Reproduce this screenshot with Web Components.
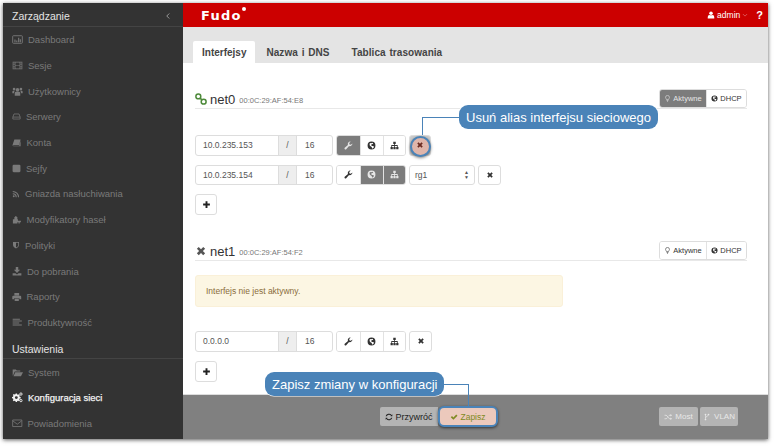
<!DOCTYPE html>
<html lang="pl">
<head>
<meta charset="utf-8">
<title>Fudo</title>
<style>
  html, body { margin: 0; background: #fff; height: 100%; overflow: hidden; }
  body { padding: 3px 0 0 3px; box-sizing: border-box; font-family: "Liberation Sans", Arial, sans-serif; }
</style>
</head>
<body>
<fudo-window>
  <side-nav slot="nav">
    <nav-heading first>Zarządzanie</nav-heading>
    <nav-item icon="dashboard" w="11">Dashboard</nav-item>
    <nav-item icon="film" w="11">Sesje</nav-item>
    <nav-item icon="users" w="11">Użytkownicy</nav-item>
    <nav-item icon="hdd" w="9">Serwery</nav-item>
    <nav-item icon="book" w="9.5">Konta</nav-item>
    <nav-item icon="safe" w="9">Sejfy</nav-item>
    <nav-item icon="rss" w="8">Gniazda nasłuchiwania</nav-item>
    <nav-item icon="puzzle" w="9.5">Modyfikatory haseł</nav-item>
    <nav-item icon="shield" w="8">Polityki</nav-item>
    <nav-item icon="download" w="10">Do pobrania</nav-item>
    <nav-item icon="print" w="9.5">Raporty</nav-item>
    <nav-item icon="lines" w="10.5">Produktywność</nav-item>
    <nav-heading>Ustawienia</nav-heading>
    <nav-item icon="folder" w="11">System</nav-item>
    <nav-item icon="cogs" w="11" active>Konfiguracja sieci</nav-item>
    <nav-item icon="envelope" w="10.5">Powiadomienia</nav-item>
  </side-nav>
  <top-bar slot="top"></top-bar>
  <tab-bar slot="tabs">
    <tab-item active>Interfejsy</tab-item>
    <tab-item>Nazwa i DNS</tab-item>
    <tab-item>Tablica trasowania</tab-item>
  </tab-bar>

  <net-section name="net0" mac="00:0C:29:AF:54:E8" icon="link" on>
    <addr-row ip="10.0.235.153" prefix="16" pressed="wrench" remove="highlight"></addr-row>
    <addr-row ip="10.0.235.154" prefix="16" pressed="globe sitemap" select="rg1"></addr-row>
    <plus-button></plus-button>
  </net-section>

  <net-section name="net1" mac="00:0C:29:AF:54:F2" icon="times" style="margin-top:27px">
    <alert-box>Interfejs nie jest aktywny.</alert-box>
    <addr-row ip="0.0.0.0" prefix="16"></addr-row>
    <plus-button></plus-button>
  </net-section>

  <foot-bar slot="foot"></foot-bar>

  <call-out slot="over" side="left" style="left:456px;top:102px">Usuń alias interfejsu sieciowego</call-out>
  <call-out slot="over" side="right" style="left:262px;top:369px">Zapisz zmiany w konfiguracji</call-out>
</fudo-window>

<script>
/** Icon shapes, all on a 16x16 box. */
const ICONS = {
  dashboard: '<rect x="1" y="2.5" width="14" height="11" rx="1" fill="none" stroke="currentColor" stroke-width="1.3"/><path d="M3.5 8h1.6v4H3.5zM6.2 9.5h1.6V12H6.2zM8.9 5.5h1.6V12H8.9zM11.3 7.5h1.6V12h-1.6z"/>',
  film: '<path fill-rule="evenodd" d="M1 2.5h14v11H1zM2 3.5v2h2v-2zM2 6.5v3h2v-3zM2 10.5v2h2v-2zM5 3.5v4h6v-4zM5 8.5v4h6v-4zM12 3.5v2h2v-2zM12 6.5v3h2v-3zM12 10.5v2h2v-2z"/>',
  users: '<circle cx="8" cy="5.5" r="2.7"/><circle cx="3" cy="4.5" r="1.9"/><circle cx="13" cy="4.5" r="1.9"/><path d="M4 14V10.5Q4 8.5 6 8.5h4q2 0 2 2V14zM.5 10.5V8.5Q.5 7 2 7h2Q3 8.5 3 10.5zM15.5 10.5V8.5Q15.5 7 14 7h-2q1 1.5 1 3.5z"/>',
  hdd: '<path fill="none" stroke="currentColor" stroke-width="1.3" d="M1.5 9l2-5.5h9l2 5.5v3.5h-13zM1.5 9h13"/>',
  book: '<path d="M4 2.5h10.5L12 12H3Q1.5 12 1.5 13.5H12l2.5-9V14H2.5Q.5 14 1 11.5z"/>',
  safe: '<rect x="1" y="1.5" width="14" height="13" rx="2"/>',
  rss: '<circle cx="3.5" cy="12.5" r="1.9"/><path d="M1.5 6.5a8 8 0 0 1 8 8H7.3a5.8 5.8 0 0 0-5.8-5.8zM1.5 1.8a12.7 12.7 0 0 1 12.7 12.7H12A10.5 10.5 0 0 0 1.5 4z"/>',
  puzzle: '<path d="M4 7V3.5h1.5V1.5h2v2H9V7h1v2.500h5V12h-2v2.500h-2V12H9v2.500H1.500V7z"/>',
  shield: '<path fill-rule="evenodd" d="M2 2h12v6.5q0 4-6 6.5-6-2.5-6-6.5zM8 3.5v9.5q4.5-2 4.5-4.5v-5z"/>',
  download: '<path d="M6 1.5h4V6h3L8 11 3 6h3zM1 11.5h4.5L8 13.5l2.5-2H15V15H1z"/>',
  print: '<path d="M4 1.5h8V6H4zM2 6.5h12q1.5 0 1.5 1.5v4H12.5v-1.5h-9V12H.5V8Q.5 6.5 2 6.5zM4.500 11.5h7V15h-7z"/>',
  lines: '<path d="M1 2.5h11V4H1zM1 5.5h14V7H1zM1 8.5h10V10H1zM1 11.5h14V13H1z"/>',
  folder: '<path d="M1 12.5V3.5h4.5L7 5h5v1.5H4L1.5 12.5zM4.8 7.5H16L13 13.5H2.2z"/>',
  cogs: '<path fill-rule="evenodd" d="M5.3 3.5h2l.3 1.500 1.200.5 1.300-.8 1.300 1.400-.8 1.200.5 1.200 1.500.4v1.900l-1.500.3-.5 1.200.8 1.300-1.300 1.300-1.300-.8-1.200.5-.3 1.500h-2l-.3-1.500-1.200-.5-1.300.8-1.300-1.300.8-1.300-.5-1.200L0 10.600V8.700l1.500-.4.5-1.200-.8-1.200 1.300-1.400 1.300.8 1.200-.5zM6.300 7.500a2.100 2.100 0 1 0 0 4.300 2.100 2.100 0 0 0 0-4.300z" transform="translate(0 -1.5)"/><circle cx="13" cy="3" r="1.7" fill="none" stroke="currentColor" stroke-width="1.3"/><circle cx="13" cy="12.5" r="1.7" fill="none" stroke="currentColor" stroke-width="1.3"/>',
  envelope: '<path fill="none" stroke="currentColor" stroke-width="1.2" d="M1 3h14v10H1zM1.5 4.5L8 9.5l6.5-5"/>',
  wrench: '<path d="M14.8 4.3a4.3 4.3 0 0 1-5.8 4.5L3.9 14.5a1.7 1.7 0 0 1-2.6-2.4L7 7A4.3 4.3 0 0 1 11.8 1.2L9.2 3.7l.6 2.5 2.5.6z"/>',
  globe: '<path fill-rule="evenodd" d="M8 1a7 7 0 1 0 0 14A7 7 0 0 0 8 1zM5 3.5l2.5.5L9 3l2 .8-.7 1.7-2.3.4-.6 1.600 1.600 1.500h2.500l.8 2-2.300 2.200-1.200-.2-.3-2.500-2.300-1-1.700-2.500.4-1.500z"/>',
  sitemap: '<path d="M5.8 1.5h4.4v4H8.7v1.800h5v3.200H15v4h-4v-4h1.300V8.700H8.700v1.800H10v4H6v-4h1.300V8.700H3.700v1.800H5v4H1v-4h1.300V7.300h5V5.500H5.800z"/>',
  times: '<path d="M2.5 5L5 2.5l3 3 3-3L13.5 5l-3 3 3 3-2.500 2.500-3-3-3 3L2.500 11l3-3z"/>',
  plus: '<path d="M6.3 2h3.4v4.3H14v3.4H9.7V14H6.3V9.7H2V6.3h4.3z"/>',
  link: '<g fill="none" stroke="currentColor" stroke-width="2"><rect x="1.2" y="1.2" width="6.5" height="6.5" rx="3.2"/><rect x="8.3" y="8.3" width="6.5" height="6.5" rx="3.2"/><path d="M6.5 6.5l3 3"/></g>',
  bulb: '<path fill="none" stroke="currentColor" stroke-width="1.3" d="M5.8 10.5C5.5 8.5 3.5 7.8 3.5 5.5a4.5 4.5 0 0 1 9 0c0 2.3-2 3-2.3 5zM6 12.5h4M6.8 14.5h2.4"/>',
  refresh: '<path d="M13.7 6.5H11l1-1A5 5 0 0 0 3.5 6.5H1.3A7 7 0 0 1 13.3 3.8L14.7 2.5v4zM2.3 9.5H5l-1 1a5 5 0 0 0 8.500-1h2.200A7 7 0 0 1 2.700 12.200L1.300 13.500v-4z"/>',
  check: '<path d="M1.5 8.5L4 6l2.8 2.8L12.5 3 15 5.5l-8.200 8.200z"/>',
  random: '<path fill="none" stroke="currentColor" stroke-width="1.5" d="M1 4.5h3c3 0 4.500 7 7.500 7H14M1 11.500h3c1.200 0 2-1 2.800-2.300M9 6.500c.7-1.100 1.500-2 2.500-2H14"/><path d="M13 2l3 2.500L13 7zM13 9l3 2.500-3 2.500z"/>',
  fork: '<circle cx="5" cy="3" r="1.7"/><circle cx="5" cy="13" r="1.7"/><circle cx="11" cy="3" r="1.7"/><path fill="none" stroke="currentColor" stroke-width="1.3" d="M5 3v10M11 3c0 4-6 3-6 7"/>',
  user: '<circle cx="8" cy="4.5" r="3.5"/><path d="M1.5 15v-3q0-4 3.500-4.200 3 1.800 6 0Q14.500 8 14.500 12v3z"/>',
  chevleft: '<path fill="none" stroke="currentColor" stroke-width="1.7" d="M10.5 3L5.5 8l5 5"/>',
  chevdown: '<path fill="none" stroke="currentColor" stroke-width="1.3" d="M2.5 5.5L8 11l5.500-5.500"/>',
};

/** Small inline SVG icon; takes its colour from the text around it. */
class UiIcon extends HTMLElement {
  static get observedAttributes() {
    return ["name", "size"];
  }

  constructor() {
    super();
    this.attachShadow({ mode: "open" });
  }

  connectedCallback() {
    this.render();
  }

  attributeChangedCallback() {
    this.render();
  }

  render() {
    const size = this.getAttribute("size") ?? "10";
    const name = this.getAttribute("name") ?? "";
    this.shadowRoot.innerHTML = `
      <style>
        :host { display: inline-flex; flex: none; width: ${size}px; height: ${size}px; }
        svg { width: 100%; height: 100%; fill: currentColor; display: block; }
      </style>
      <svg viewBox="0 0 16 16" aria-hidden="true">${ICONS[name] ?? ""}</svg>`;
  }
}
customElements.define("ui-icon", UiIcon);

/** Application frame: sidebar on the left, header, tabs, content and footer on the right. */
class FudoWindow extends HTMLElement {
  constructor() {
    super();
    this.attachShadow({ mode: "open" }).innerHTML = `
      <style>
        :host {
          display: flex;
          position: relative;
          width: 765px;
          height: 436px;
          background: #fff;
          box-shadow: 0 1px 4px rgba(0, 0, 0, .65);
        }
        .main { flex: 1; min-width: 0; display: flex; flex-direction: column; }
        .content { flex: 1; min-height: 0; padding: 27px 21px 0 12px; overflow: hidden; }
      </style>
      <slot name="nav"></slot>
      <div class="main">
        <slot name="top"></slot>
        <slot name="tabs"></slot>
        <div class="content"><slot></slot></div>
        <slot name="foot"></slot>
      </div>
      <slot name="over"></slot>`;
  }
}
customElements.define("fudo-window", FudoWindow);

class SideNav extends HTMLElement {
  constructor() {
    super();
    this.attachShadow({ mode: "open" }).innerHTML = `
      <style>
        :host {
          display: flex;
          flex-direction: column;
          flex: none;
          position: relative;
          width: 180px;
          background: #333;
        }
        .toggle { position: absolute; display: flex; top: 9px; right: 11px; color: #aaa; }
      </style>
      <span class="toggle"><ui-icon name="chevleft" size="8"></ui-icon></span>
      <slot></slot>`;
  }
}
customElements.define("side-nav", SideNav);

class NavHeading extends HTMLElement {
  constructor() {
    super();
    this.attachShadow({ mode: "open" }).innerHTML = `
      <style>
        :host {
          display: flex;
          align-items: center;
          box-sizing: border-box;
          height: 24px;
          padding: 3px 0 0 9px;
          font-size: 10.5px;
          color: #e4e4e4;
          border-bottom: 1px solid #444;
        }
        :host(:not([first])) { padding-top: 5px; }
      </style>
      <slot></slot>`;
  }
}
customElements.define("nav-heading", NavHeading);

class NavItem extends HTMLElement {
  constructor() {
    super();
    const icon = this.getAttribute("icon") ?? "";
    const width = this.getAttribute("w") ?? "10";
    this.attachShadow({ mode: "open" }).innerHTML = `
      <style>
        :host {
          display: flex;
          align-items: center;
          gap: 5px;
          height: 25.7px;
          padding-left: 9px;
          font-size: 9.5px;
          color: #7a7a7a;
        }
        :host([active]) { color: #f2f2f2; -webkit-text-stroke: .25px #f2f2f2; }
        .box { display: flex; width: ${width}px; justify-content: center; }
      </style>
      <span class="box"><ui-icon name="${icon}" size="${width}"></ui-icon></span>
      <slot></slot>`;
  }
}
customElements.define("nav-item", NavItem);

class TopBar extends HTMLElement {
  constructor() {
    super();
    this.attachShadow({ mode: "open" }).innerHTML = `
      <style>
        :host {
          display: flex;
          align-items: center;
          flex: none;
          height: 24px;
          padding: 0 5px 0 18px;
          background: #c00;
          color: #fff;
        }
        .logo { font: bold 13px/1 "DejaVu Sans", sans-serif; letter-spacing: 1.2px; position: relative; }
        .dot { position: absolute; top: -2px; right: -4px; width: 4px; height: 4px; border-radius: 50%; background: #fff; }
        .user { margin-left: auto; display: flex; align-items: center; gap: 2px; font-size: 8.5px; }
        .caret { display: flex; color: #f0a8a8; }
        .help { margin-left: 8px; font-size: 11px; font-weight: bold; }
      </style>
      <span class="logo">Fudo<span class="dot"></span></span>
      <span class="user"><ui-icon name="user" size="8"></ui-icon>admin<span class="caret"><ui-icon name="chevdown" size="6"></ui-icon></span></span>
      <span class="help">?</span>`;
  }
}
customElements.define("top-bar", TopBar);

class TabBar extends HTMLElement {
  constructor() {
    super();
    this.attachShadow({ mode: "open" }).innerHTML = `
      <style>
        :host {
          display: flex;
          align-items: flex-end;
          flex: none;
          height: 36px;
          padding-left: 10px;
          background: #e4e4e4;
        }
      </style>
      <slot></slot>`;
  }
}
customElements.define("tab-bar", TabBar);

class TabItem extends HTMLElement {
  constructor() {
    super();
    this.attachShadow({ mode: "open" }).innerHTML = `
      <style>
        :host {
          display: flex;
          align-items: center;
          height: 22px;
          padding: 0 10px;
          margin-right: 2px;
          font-size: 10px;
          letter-spacing: .05px;
          word-spacing: 1px;
          font-weight: bold;
          color: #444;
          border-radius: 2px 2px 0 0;
        }
        :host([active]) { background: #fff; padding: 0 9px; margin-right: 1px; letter-spacing: 0; }
      </style>
      <slot></slot>`;
  }
}
customElements.define("tab-item", TabItem);

/** One network interface: title, state toggles and whatever is slotted below. */
class NetSection extends HTMLElement {
  constructor() {
    super();
    const on = this.hasAttribute("on");
    this.attachShadow({ mode: "open" }).innerHTML = `
      <style>
        :host { display: block; }
        .head {
          display: flex;
          align-items: flex-end;
          height: 18px;
          border-bottom: 1px solid #e8e8e8;
        }
        .icon { color: ${on ? "#4d8a3a" : "#555"}; margin: 0 3px 3px 0; }
        .name { font-size: 13px; color: #333; line-height: 15px; margin-bottom: 1px; }
        .mac { font-size: 7.5px; color: #777; margin: 0 0 3px 4px; }
        .toggles { margin-left: auto; }
        .body { display: flex; flex-direction: column; align-items: flex-start; gap: 9px; margin-top: 26px; }
        ::slotted(alert-box) { margin: -12px 0 15px; }
      </style>
      <div class="head">
        <ui-icon class="icon" name="${this.getAttribute("icon")}" size="12"></ui-icon>
        <span class="name">${this.getAttribute("name")}</span>
        <span class="mac">${this.getAttribute("mac")}</span>
        <btn-group class="toggles">
          <ui-btn ${on ? "pressed" : ""} small icon="bulb" w="46">Aktywne</ui-btn>
          <ui-btn small icon="globe" w="40">DHCP</ui-btn>
        </btn-group>
      </div>
      <div class="body"><slot></slot></div>`;
  }
}
customElements.define("net-section", NetSection);

class BtnGroup extends HTMLElement {
  constructor() {
    super();
    this.attachShadow({ mode: "open" }).innerHTML = `
      <style>
        :host {
          display: inline-flex;
          border: 1px solid #ddd;
          border-radius: 3px;
          overflow: hidden;
          background: #fff;
        }
        ::slotted(ui-btn:not(:first-child)) { border-left: 1px solid #e2e2e2; }
      </style>
      <slot></slot>`;
  }
}
customElements.define("btn-group", BtnGroup);

/** Flat button with optional icon; "pressed" paints it dark grey. */
class UiBtn extends HTMLElement {
  constructor() {
    super();
    const icon = this.getAttribute("icon");
    const width = this.getAttribute("w") ?? "23";
    const small = this.hasAttribute("small");
    this.attachShadow({ mode: "open" }).innerHTML = `
      <style>
        :host {
          display: flex;
          align-items: center;
          justify-content: center;
          gap: 2px;
          box-sizing: border-box;
          width: ${width}px;
          height: ${small ? "17px" : "100%"};
          font-size: 7.5px;
          color: #333;
          background: #fff;
        }
        :host([pressed]) { background: #7c7c7c; color: #e6e6e6; }
      </style>
      ${icon ? `<ui-icon name="${icon}" size="${small ? 7 : 9}"></ui-icon>` : ""}
      <slot></slot>`;
  }
}
customElements.define("ui-btn", UiBtn);

/** Address row: IP / prefix, the three role toggles, optional group select, remove button. */
class AddrRow extends HTMLElement {
  constructor() {
    super();
    const pressed = (this.getAttribute("pressed") ?? "").split(" ");
    const select = this.getAttribute("select");
    const hot = this.getAttribute("remove") === "highlight";
    const role = (name) =>
      `<ui-btn icon="${name}" w="${name === "wrench" ? 23 : 22.5}" ${pressed.includes(name) ? "pressed" : ""}></ui-btn>`;
    this.attachShadow({ mode: "open" }).innerHTML = `
      <style>
        :host { display: flex; gap: 3px; height: 20.5px; color: #555; font-size: 8.5px; }
        .addr { display: flex; border: 1px solid #ddd; border-radius: 3px; box-sizing: border-box; }
        .addr span { display: flex; align-items: center; box-sizing: border-box; }
        .ip { width: 82px; padding-left: 7px; }
        .slash { width: 19px; justify-content: center; background: #eee; border: solid #ddd; border-width: 0 1px; }
        .prefix { width: 35px; padding-left: 8px; }
        btn-group { height: 20.5px; box-sizing: border-box; }
        .select {
          display: flex;
          align-items: center;
          justify-content: space-between;
          box-sizing: border-box;
          width: 66px;
          padding: 0 5px;
          border: 1px solid #ddd;
          border-radius: 3px;
        }
        .arrows { font-size: 5px; line-height: 5px; text-align: center; }
        .remove {
          position: relative;
          display: flex;
          align-items: center;
          justify-content: center;
          box-sizing: border-box;
          width: 23px;
          border: 1px solid #ddd;
          border-radius: 3px;
          color: #333;
        }
        .remove.hot { background: #ccc; color: #6a2a20; width: 22px; }
        .remove.hot::before {
          content: "";
          position: absolute;
          left: -.5px;
          top: -.5px;
          width: 17px;
          height: 17px;
          border: 2px solid #4a83b8;
          border-radius: 50%;
          background: #dfb5aa;
          box-shadow: 0 1px 3px rgba(0, 0, 0, .5);
        }
        .remove ui-icon { position: relative; }
      </style>
      <div class="addr">
        <span class="ip">${this.getAttribute("ip")}</span>
        <span class="slash">/</span>
        <span class="prefix">${this.getAttribute("prefix")}</span>
      </div>
      <btn-group>${role("wrench")}${role("globe")}${role("sitemap")}</btn-group>
      ${select ? `<div class="select"><span>${select}</span><span class="arrows">▲<br>▼</span></div>` : ""}
      <div class="remove ${hot ? "hot" : ""}"><ui-icon name="times" size="8"></ui-icon></div>`;
  }
}
customElements.define("addr-row", AddrRow);

class PlusButton extends HTMLElement {
  constructor() {
    super();
    this.attachShadow({ mode: "open" }).innerHTML = `
      <style>
        :host {
          display: flex;
          align-items: center;
          justify-content: center;
          box-sizing: border-box;
          width: 22px;
          height: 21px;
          border: 1px solid #ddd;
          border-radius: 3px;
          color: #222;
        }
      </style>
      <ui-icon name="plus" size="9"></ui-icon>`;
  }
}
customElements.define("plus-button", PlusButton);

class AlertBox extends HTMLElement {
  constructor() {
    super();
    this.attachShadow({ mode: "open" }).innerHTML = `
      <style>
        :host {
          display: flex;
          align-items: center;
          box-sizing: border-box;
          width: 368px;
          height: 32px;
          padding-left: 10px;
          font-size: 8.5px;
          color: #8a6d3b;
          background: #fcf6e3;
          border: 1px solid #faf0d8;
          border-radius: 3px;
        }
      </style>
      <slot></slot>`;
  }
}
customElements.define("alert-box", AlertBox);

class FootBar extends HTMLElement {
  constructor() {
    super();
    this.attachShadow({ mode: "open" }).innerHTML = `
      <style>
        :host {
          display: flex;
          align-items: center;
          flex: none;
          height: 45px;
          padding: 0 30px 1px 197px;
          box-sizing: border-box;
          background: #808080;
          border-top: 1px solid #ddd;
          font-size: 8.5px;
        }
        .center { display: flex; align-items: center; }
        .right { display: flex; gap: 2px; margin-left: auto; }
        .btn {
          display: flex;
          align-items: center;
          gap: 2px;
          box-sizing: border-box;
          height: 19px;
          border-radius: 2px;
          background: #b4b4b4;
        }
        .restore { width: 58px; justify-content: center; color: #222; border-radius: 2px 0 0 2px; font-size: 9px; }
        .save {
          width: 60px;
          height: 21px;
          justify-content: center;
          color: #7f8a22;
          background: #ecc9bc;
          border: 2px solid #4a83b8;
          border-radius: 6px;
          box-shadow: 0 1px 3px rgba(0, 0, 0, .6);
        }
        .off { justify-content: center; gap: 3px; color: #e8e8e8; font-size: 8px; }
      </style>
      <div class="center">
        <span class="btn restore"><ui-icon name="refresh" size="8"></ui-icon>Przywróć</span>
        <span class="btn save"><ui-icon name="check" size="8"></ui-icon>Zapisz</span>
      </div>
      <div class="right">
        <span class="btn off" style="width:39px"><ui-icon name="random" size="8"></ui-icon>Most</span>
        <span class="btn off" style="width:38px"><ui-icon name="fork" size="8"></ui-icon>VLAN</span>
      </div>`;
  }
}
customElements.define("foot-bar", FootBar);

/** Blue annotation bubble laid over the UI, with a thin leader line to its target. */
class CallOut extends HTMLElement {
  constructor() {
    super();
    this.attachShadow({ mode: "open" }).innerHTML = `
      <style>
        :host {
          position: absolute;
          display: flex;
          align-items: center;
          box-sizing: border-box;
          height: 24px;
          padding: 0 7px;
          font-size: 13px;
          white-space: nowrap;
          color: #fff;
          background: #4a83b8;
          border-radius: 9px;
          box-shadow: 0 0 0 .5px #fff;
        }
        .line { position: absolute; box-sizing: border-box; border-color: #4a83b8; border-style: solid; }
        :host([side="left"]) .line { right: 100%; top: 12px; width: 37px; height: 18px; border-width: 1px 0 0 1px; }
        :host([side="right"]) .line { left: 100%; top: 12px; width: 25px; height: 24px; border-width: 1px 1px 0 0; }
      </style>
      <span class="line"></span>
      <slot></slot>`;
  }
}
customElements.define("call-out", CallOut);
</script>
</body>
</html>
